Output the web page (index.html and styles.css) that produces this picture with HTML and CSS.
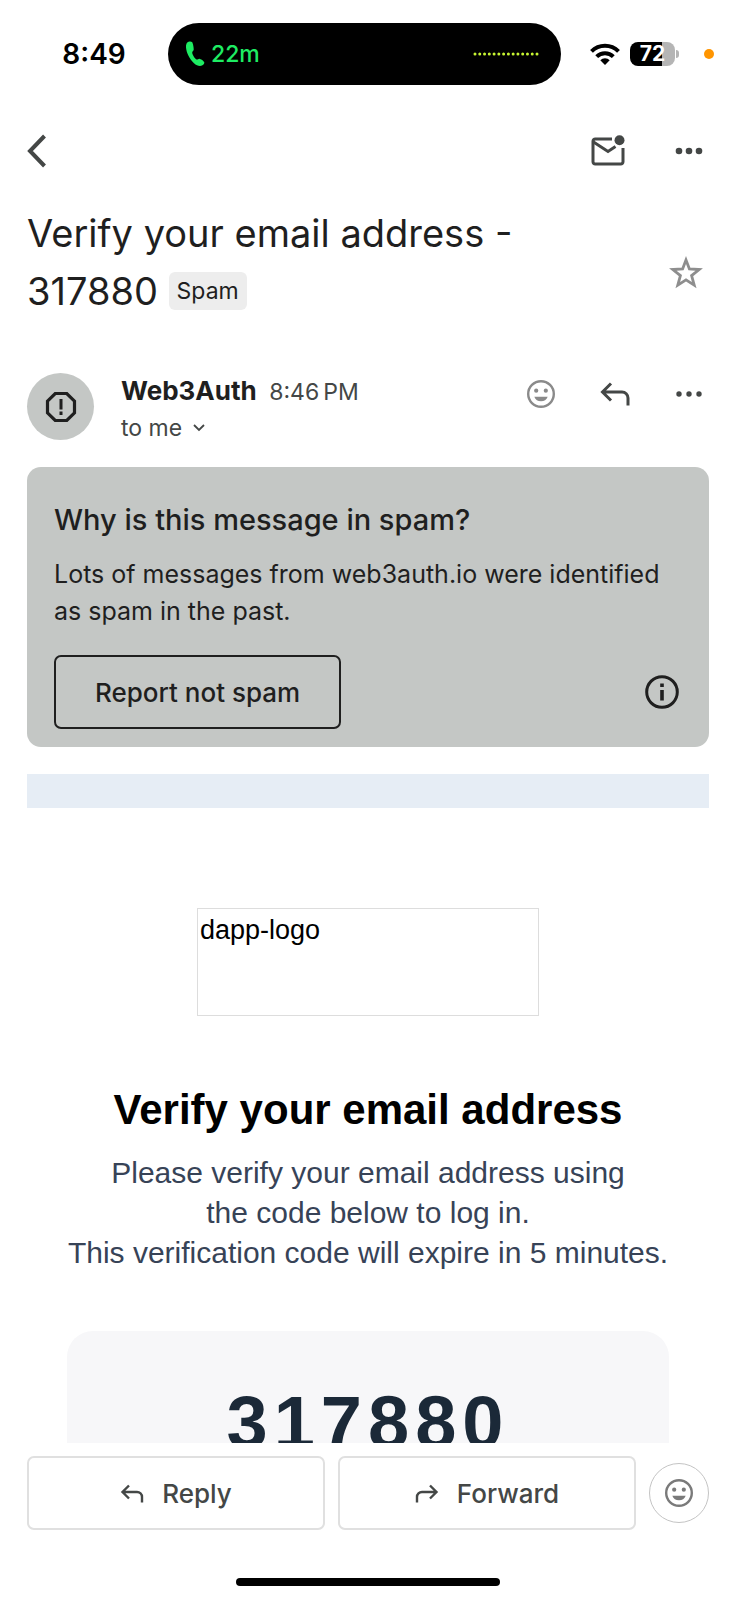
FILE: index.html
```html
<!DOCTYPE html>
<html lang="en">
<head>
    <meta charset="UTF-8">
    <meta name="viewport" content="width=device-width, initial-scale=1.0">
    <title>Verify your email address</title>
    <link rel="stylesheet" href="styles.css">
</head>
<body>

    <div class="status-bar">
        <span class="clock">8:49</span>
        <div class="island">
            <svg width="20" height="26" viewBox="0 0 20 26" fill="#1eec63"><path d="M4.500.5C2 .8.700 3 1 6.500c.5 5.500 3.500 11.500 8 15.800 2.600 2.300 5.500 3.200 8 2.300 1.800-.8 2.600-2.300 2.200-3.500-.4-1.200-3.600-3.200-4.800-3.400-1-.1-1.500.9-2.700.9-1.600-.4-4.400-4.900-4.500-7 .1-1.300 1.400-1.600 1.500-2.800C8.800 6.700 8 2.500 7.200 1.300 6.600.6 5.600.3 4.500.5z"/></svg>
            <span class="call-time">22m</span>
            <svg class="wave" width="68" height="4" viewBox="0 0 68 4"><path d="M2 2h65" stroke="#c6f432" stroke-width="3" stroke-linecap="round" stroke-dasharray="0 4.770"/></svg>
        </div>
        <svg class="wifi" width="30" height="22" viewBox="0 0 30 22">
            <g fill="none" stroke="#000" stroke-width="4"><path d="M1.500 8.300a19 19 0 0 1 27 0"/><path d="M6.700 13.600a11.700 11.700 0 0 1 16.600 0"/></g>
            <path d="M15 22l-4.700-4.800a6.600 6.600 0 0 1 9.400 0z"/>
        </svg>
        <span class="battery">72</span>
        <span class="mic-dot"></span>
    </div>

    <nav class="toolbar">
        <button class="icon-btn back" aria-label="Back">
            <svg width="20" height="34" viewBox="0 0 20 34"><path d="M17.500 2L3 17l14.500 15" fill="none" stroke="#444746" stroke-width="4"/></svg>
        </button>
        <button class="icon-btn" aria-label="Mark as unread">
            <svg width="34" height="32" viewBox="0 0 34 32"><g fill="none" stroke="#444746" stroke-width="3"><path d="M21 4H4.200A2.200 2.200 0 0 0 2 6.200v20.600A2.200 2.200 0 0 0 4.200 29h25.600a2.200 2.200 0 0 0 2.200-2.200V13"/><path d="M2.500 7L17 16.500l7.500-5"/></g><circle cx="28.500" cy="5.200" r="5" fill="#444746"/></svg>
        </button>
        <button class="icon-btn" aria-label="More options">
            <svg width="28" height="8" viewBox="0 0 28 8" fill="#444746"><circle cx="4" cy="4" r="3.300"/><circle cx="14" cy="4" r="3.300"/><circle cx="24" cy="4" r="3.300"/></svg>
        </button>
    </nav>

    <main class="message">
        <header class="subject">
            <h1>Verify your email address - 317880 <span class="chip">Spam</span></h1>
            <button class="icon-btn star" aria-label="Star">
                <svg width="34" height="33" viewBox="0 0 34 33"><path d="M17 4l3.400 9 9.800.5-7.600 6.100 2.600 9.500L17 23.800l-8.200 5.300 2.600-9.500-7.600-6.100 9.800-.5z" fill="none" stroke="#8e8e8e" stroke-width="2.800"/></svg>
            </button>
        </header>

        <div class="sender">
            <span class="avatar">
                <svg width="32" height="32" viewBox="0 0 32 32"><path d="M10.200 2.500h11.600l7.700 7.700v11.600l-7.700 7.700H10.200l-7.700-7.700V10.200z" fill="none" stroke="#1f1f1f" stroke-width="3.200"/><path d="M16 8v10.500M16 20.500V24" stroke="#1f1f1f" stroke-width="3"/></svg>
            </span>
            <div class="sender-info">
                <p><strong>Web3Auth</strong> <time>8:46&#8239;PM</time></p>
                <button class="recipient">to me <svg width="12" height="8" viewBox="0 0 12 8"><path d="M1 1l5 5 5-5" fill="none" stroke="#444746" stroke-width="1.800"/></svg></button>
            </div>
            <div class="sender-actions">
                <button class="icon-btn" aria-label="Add reaction">
                    <svg width="28" height="28" viewBox="0 0 28 28"><circle cx="14" cy="14" r="12.800" fill="none" stroke="#8a8a8a" stroke-width="2.400"/><circle cx="9.200" cy="10.700" r="2.100" fill="#8a8a8a"/><circle cx="18.800" cy="10.700" r="2.100" fill="#8a8a8a"/><path d="M7.300 16.800h13.400a7.200 7.200 0 0 1-13.400 0z" fill="#8a8a8a"/></svg>
                </button>
                <button class="icon-btn" aria-label="Reply">
                    <svg width="30" height="24" viewBox="0 0 30 24"><path d="M11 1.500L2.500 10 11 18.500M2.500 10H22a6 6 0 0 1 6 6v7.500" fill="none" stroke="#444746" stroke-width="3"/></svg>
                </button>
                <button class="icon-btn" aria-label="More message options">
                    <svg width="28" height="8" viewBox="0 0 28 8" fill="#444746"><circle cx="4" cy="4" r="2.700"/><circle cx="14" cy="4" r="2.700"/><circle cx="24" cy="4" r="2.700"/></svg>
                </button>
            </div>
        </div>

        <section class="spam-card">
            <h2>Why is this message in spam?</h2>
            <p>Lots of messages from web3auth.io were identified as spam in the past.</p>
            <div class="spam-actions">
                <button class="outline-btn">Report not spam</button>
                <button class="icon-btn" aria-label="More information">
                    <svg width="34" height="34" viewBox="0 0 34 34"><circle cx="17" cy="17" r="15.300" fill="none" stroke="#1f1f1f" stroke-width="3"/><path d="M17 8.500V12M17 15v10.500" stroke="#1f1f1f" stroke-width="3.600"/></svg>
                </button>
            </div>
        </section>

        <article class="mail">
            <div class="banner"></div>
            <div class="logo">dapp-logo</div>
            <h2>Verify your email address</h2>
            <p>Please verify your email address using<br>the code below to log in.<br>This verification code will expire in 5 minutes.</p>
            <div class="code">317880</div>
        </article>
    </main>

    <footer class="reply-bar">
        <button class="reply-btn">
            <svg width="24" height="19" viewBox="0 0 24 19"><path d="M9 1.500L2.500 8 9 14.500M2.500 8H17a5 5 0 0 1 5 5v5.500" fill="none" stroke="#444746" stroke-width="2.400"/></svg>
            Reply
        </button>
        <button class="reply-btn">
            <svg width="24" height="19" viewBox="0 0 24 19"><path d="M15 1.500L21.500 8 15 14.500M21.500 8H7a5 5 0 0 0-5 5v5.500" fill="none" stroke="#444746" stroke-width="2.400"/></svg>
            Forward
        </button>
        <button class="emoji-btn" aria-label="React with emoji">
            <svg width="28" height="28" viewBox="0 0 28 28"><circle cx="14" cy="14" r="12.800" fill="none" stroke="#7a7a7a" stroke-width="2.400"/><circle cx="9.200" cy="10.700" r="2.100" fill="#7a7a7a"/><circle cx="18.800" cy="10.700" r="2.100" fill="#7a7a7a"/><path d="M7.300 16.800h13.400a7.200 7.200 0 0 1-13.400 0z" fill="#7a7a7a"/></svg>
        </button>
    </footer>
    <div class="home-indicator"></div>

</body>
</html>
```

FILE: styles.css
```css
* { box-sizing: border-box; }
body { display: flex; flex-direction: column; height: 100vh; margin: 0; background: #fff; color: #1f1f1f; font-family: Inter, Roboto, sans-serif; }
h1, h2, p { margin: 0; font-weight: 400; }
button { padding: 0; border: 0; background: none; color: inherit; font-family: inherit; cursor: pointer; }
svg { display: block; flex: none; }

/* Phone status bar */
.status-bar { display: flex; align-items: center; flex: none; height: 108px; padding: 0 22px 0 20px; color: #000; }
.clock { width: 148px; text-align: center; font-size: 28px; font-weight: 600; }
.island { display: flex; flex: 1; align-items: center; gap: 6px; height: 62px; padding: 0 20px 0 17px; border-radius: 31px; background: #000; }
.call-time { color: #1eec63; font-size: 23px; font-weight: 500; }
.wave { margin-left: auto; }
.wifi { margin: 0 10px 0 29px; }
.battery { position: relative; width: 45px; height: 24px; margin-right: 29px; border-radius: 8px; background: linear-gradient(to right, #000 72%, #b5b5b5 72%); color: #fff; text-align: center; font-size: 21px; font-weight: 700; line-height: 24px; }
.battery::after { content: ""; position: absolute; top: 8px; right: -4px; width: 3px; height: 8px; border-radius: 0 4px 4px 0; background: #b5b5b5; }
.mic-dot { width: 10px; height: 10px; border-radius: 50%; background: #ff9500; }

.toolbar { display: flex; align-items: center; flex: none; gap: 50px; height: 86px; padding: 0 33px 0 27px; }
.back { margin-right: auto; }

.message { flex: 1; min-height: 0; padding: 10px 27px 0; overflow-y: auto; scrollbar-width: none; }
.subject { display: flex; align-items: center; justify-content: space-between; padding-right: 6px; }
.subject h1 { width: 500px; font-size: 38px; line-height: 58px; }
.star { padding-top: 20px; }
.chip { display: inline-block; padding: 0 8px; border-radius: 6px; background: #ededed; font-size: 23px; line-height: 38px; vertical-align: 6px; }

.sender { display: flex; gap: 27px; padding: 53px 6px 0 0; }
.avatar { display: flex; align-items: center; justify-content: center; width: 67px; height: 67px; border-radius: 50%; background: #c4c7c5; }
.sender-info { flex: 1; color: #444746; font-size: 23px; line-height: 36px; }
.sender-info strong { margin-right: 6px; color: #1f1f1f; font-size: 26px; font-weight: 700; }
.recipient { display: flex; align-items: center; gap: 11px; font-size: 23px; line-height: 36px; }
.sender-actions { display: flex; align-items: center; gap: 45px; height: 42px; }

.spam-card { margin-top: 21px; padding: 34px 27px 18px; border-radius: 14px; background: #c4c7c5; }
.spam-card h2 { font-size: 29px; font-weight: 500; line-height: 38px; }
.spam-card p { margin: 17px 0 25px; font-size: 25px; line-height: 37px; }
.spam-actions { display: flex; align-items: center; justify-content: space-between; padding-right: 3px; }
.outline-btn { height: 74px; padding: 0 39px; border: 2px solid #1f1f1f; border-radius: 7px; font-size: 26px; font-weight: 500; }

/* Email body */
.mail { margin-top: 27px; color: #000; font-family: Helvetica, "Liberation Sans", Arial, sans-serif; text-align: center; }
.banner { height: 34px; background: #e6edf5; }
.logo { width: 342px; height: 108px; margin: 100px auto 0; padding: 5px 2px; border: 1px solid #ddd; font-size: 27px; line-height: 32px; text-align: left; }
.mail h2 { margin-top: 68px; font-size: 42px; font-weight: 700; line-height: 52px; }
.mail p { margin-top: 17px; color: #374357; font-size: 30px; line-height: 40px; }
.code { margin: 58px 40px 60px; padding: 52px 0; border-radius: 26px; background: #f7f7f9; color: #1b2938; font-size: 74px; font-weight: 700; line-height: 80px; letter-spacing: 6px; }

.reply-bar { display: flex; align-items: center; flex: none; gap: 13px; padding: 13px 27px 0; color: #444746; }
.reply-btn { display: flex; flex: 1; align-items: center; justify-content: center; gap: 18px; height: 74px; border: 2px solid #e0e0e0; border-radius: 7px; font-size: 26px; font-weight: 500; }
.emoji-btn { display: flex; align-items: center; justify-content: center; width: 60px; height: 60px; border: 1px solid #c4c4c4; border-radius: 50%; }
.home-indicator { flex: none; width: 36%; height: 8px; margin: 48px auto 14px; border-radius: 4px; background: #000; }
```
